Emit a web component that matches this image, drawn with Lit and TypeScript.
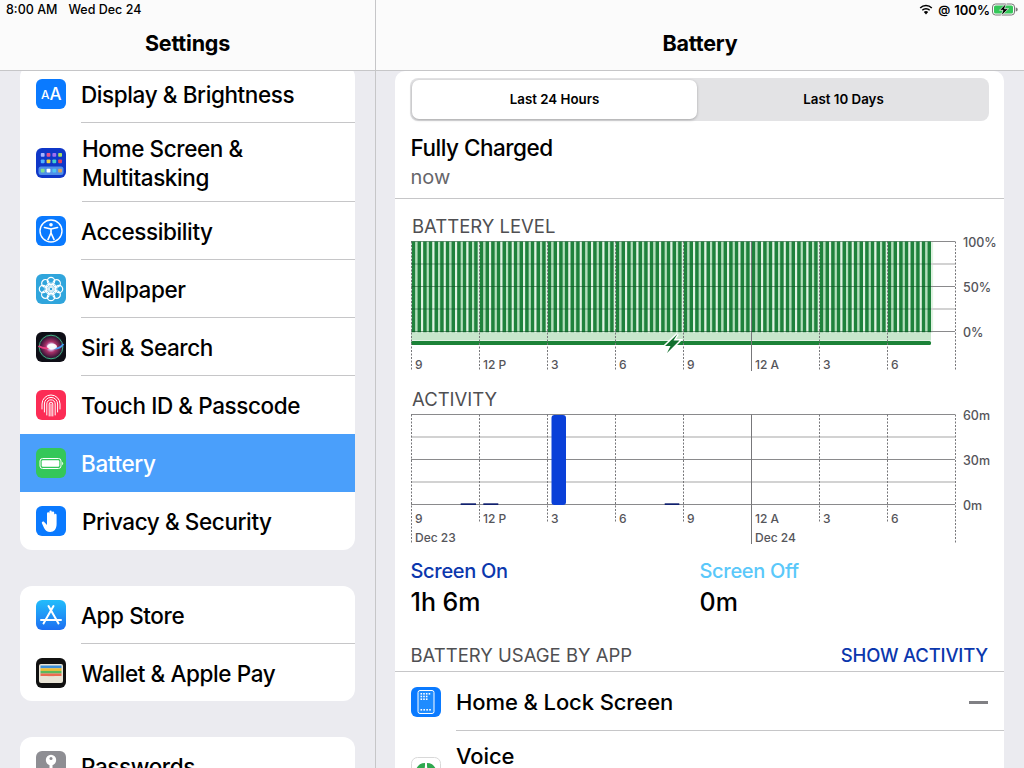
import { LitElement, html, css, svg } from "lit";
import { customElement } from "lit/decorators.js";

const ICONS: Record<string, unknown> = {
  display: html`<svg viewBox="0 0 30 30"><rect width="30" height="30" rx="6" fill="#0a7aff"/><text x="5" y="20" class="aa" font-size="12">A</text><text x="13.5" y="20.5" class="aa" font-size="17">A</text></svg>`,
  home: html`<svg viewBox="0 0 30 30"><rect width="30" height="30" rx="6" fill="#0f37c8"/>
    ${["#a8b4ff","#e8508a","#a070f0","#a8e060","#4fb0ff","#f0d040","#40d0d0","#e04060"].map((c,i)=>svg`<rect x=${4.8+(i%4)*5.8} y=${5+Math.floor(i/4)*6.4} width="3.8" height="3.8" rx=".8" fill=${c}/>`)}
    <rect x="2.5" y="18.5" width="25" height="8.5" rx="2.5" fill="#4f8fe8"/>
    ${["#7fe090","#fff","#50c8f0","#d8a060"].map((c,i)=>svg`<rect x=${4.8+i*5.8} y="20.8" width="3.8" height="3.8" rx=".8" fill=${c}/>`)}</svg>`,
  access: html`<svg viewBox="0 0 30 30"><rect width="30" height="30" rx="6" fill="#0a7aff"/><circle cx="15" cy="15" r="11" fill="none" stroke="#fff" stroke-width="1.4"/><circle cx="15" cy="8.8" r="1.8" fill="#fff"/><path d="M8.5 11.5 L15 13 L21.5 11.5 M15 13 V17 M15 17 L12 23.5 M15 17 L18 23.5" fill="none" stroke="#fff" stroke-width="1.7" stroke-linecap="round" stroke-linejoin="round"/></svg>`,
  wallpaper: html`<svg viewBox="0 0 30 30"><rect width="30" height="30" rx="6" fill="#30a5dc"/>
    ${[0,45,90,135,180,225,270,315].map(a=>svg`<circle cx="15" cy="7" r="3.7" fill="none" stroke="#fff" stroke-width="1.2" transform="rotate(${a} 15 15)"/>`)}
    ${[0,45,90,135,180,225,270,315].map(a=>svg`<circle cx="15" cy="11.2" r="2.2" fill="none" stroke="#fff" stroke-width=".9" transform="rotate(${a} 15 15)"/>`)}</svg>`,
  siri: html`<svg viewBox="0 0 30 30"><defs><radialGradient id="sg" cx=".5" cy=".5" r=".5"><stop offset="0" stop-color="#fff"/><stop offset=".18" stop-color="#d8d0ff"/><stop offset=".42" stop-color="#a83068"/><stop offset=".75" stop-color="#4a1a40"/><stop offset="1" stop-color="#0c1a20"/></radialGradient></defs><rect width="30" height="30" rx="6" fill="#0e0e16"/><circle cx="15" cy="15" r="13" fill="url(#sg)"/><circle cx="15" cy="15" r="11.8" fill="none" stroke="#3fae80" stroke-width="1"/><path d="M2.500 14 Q9 18 15 15" stroke="#e84080" fill="none" stroke-width="2"/><path d="M27.500 12 Q22 19 15 15" stroke="#4a9cf0" fill="none" stroke-width="2"/><ellipse cx="16" cy="14.500" rx="5" ry="3" fill="#fff" opacity=".92"/></svg>`,
  touch: html`<svg viewBox="0 0 30 30"><rect width="30" height="30" rx="6" fill="#fc2c55"/><g fill="none" stroke="#fff" stroke-width="1" stroke-linecap="round"><path d="M6 19 V14 A9 9 0 0 1 24 14 V19"/><path d="M8.400 22 V14 A6.600 6.600 0 0 1 21.600 14 V22"/><path d="M10.800 25 V14 A4.200 4.200 0 0 1 19.200 14 V25"/><path d="M13.200 26 V14 A1.800 1.800 0 0 1 16.800 14 V26"/><path d="M15 14 V26"/></g></svg>`,
  battery: html`<svg viewBox="0 0 30 30"><rect width="30" height="30" rx="6" fill="#34c759"/><rect x="4" y="10.500" width="21" height="10" rx="2.500" fill="none" stroke="#fff" stroke-width="1"/><rect x="5.700" y="12.200" width="17.600" height="6.600" rx="1.200" fill="#fff"/><path d="M26.200 13.800 a2 2 0 0 1 0 3.400z" fill="#fff"/></svg>`,
  hand: html`<svg viewBox="0 0 30 30"><rect width="30" height="30" rx="6" fill="#0a7aff"/><path d="M11 15 V7.500 a1.200 1.200 0 0 1 2.400 0 V13 V5.800 a1.200 1.200 0 0 1 2.400 0 V13 V6.600 a1.200 1.200 0 0 1 2.400 0 V14 V9 a1.200 1.200 0 0 1 2.400 0 V18 c0 5-2.500 8-6.500 8 c-3 0-4.600-1.500-6-4 L6 17.500 c-.8-1.500 1.200-2.600 2.200-1.400 L11 19z" fill="#fff"/></svg>`,
  appstore: html`<svg viewBox="0 0 30 30"><defs><linearGradient id="ag" x1="0" y1="0" x2="0" y2="1"><stop offset="0" stop-color="#22bdfb"/><stop offset="1" stop-color="#1d6ff2"/></linearGradient></defs><rect width="30" height="30" rx="6" fill="url(#ag)"/><path d="M12.500 6 L22.500 23.500 M17.500 6 L7.500 23.500 M5 20 H25" stroke="#fff" stroke-width="2" stroke-linecap="round" fill="none"/></svg>`,
  wallet: html`<svg viewBox="0 0 30 30"><rect width="30" height="30" rx="6" fill="#111"/><rect x="3" y="6" width="24" height="19" rx="2" fill="#e9e4d6"/><rect x="4.500" y="7.500" width="21" height="2.800" fill="#3c8fd8"/><rect x="4.500" y="10.300" width="21" height="2.600" fill="#f0bd30"/><rect x="4.500" y="12.900" width="21" height="2.600" fill="#5bb85c"/><rect x="4.500" y="15.500" width="21" height="2.600" fill="#ec6a50"/><path d="M4.500 18 H11 L15 21 L19 18 H25.500 V23 H4.500z" fill="#e9e4d6"/></svg>`,
  key: html`<svg viewBox="0 0 30 30"><rect width="30" height="30" rx="6" fill="#8e8e93"/><circle cx="15" cy="9" r="5.200" fill="#fff"/><circle cx="15" cy="7.500" r="1.500" fill="#8e8e93"/><path d="M13.500 13 H16.500 V24 L15 26 L13.500 24z" fill="#fff"/></svg>`,
};

const GROUPS = [
  [
    { icon: "display", label: "Display & Brightness" },
    { icon: "home", label: "Home Screen &\nMultitasking", tall: true },
    { icon: "access", label: "Accessibility" },
    { icon: "wallpaper", label: "Wallpaper" },
    { icon: "siri", label: "Siri & Search" },
    { icon: "touch", label: "Touch ID & Passcode" },
    { icon: "battery", label: "Battery", active: true },
    { icon: "hand", label: "Privacy & Security" },
  ],
  [
    { icon: "appstore", label: "App Store" },
    { icon: "wallet", label: "Wallet & Apple Pay" },
  ],
  [{ icon: "key", label: "Passwords" }],
];

const TICKS = [0, 68, 136, 204, 272, 340, 408, 476, 544];
const HOURS = ["9", "12 P", "3", "6", "9", "12 A", "3", "6"];

function grid(from: number, bottom: number, tall: (i: number) => number) {
  const ys = [0, 1, 2, 3, 4].map((i) => (i * bottom) / 4);
  return svg`
    ${ys.map((y, i) => svg`<line x1=${from} x2="544" y1=${y} y2=${y} stroke=${i % 2 ? "#d2d2d2" : "#8a8a8c"} stroke-width=${i % 2 ? 2 : 1}/>`)}
    ${TICKS.map((x, i) => svg`<line x1=${x + 0.5} x2=${x + 0.5} y1="0" y2=${tall(i)} stroke="#77777a" stroke-width="1" stroke-dasharray=${i === 5 ? "none" : "2 1.500"}/>`)}
  `;
}

function hourLabels(y: number) {
  return HOURS.map((h, i) => svg`<text class="tick" x=${TICKS[i] + 4} y=${y}>${h}</text>`);
}

@customElement("app-root")
export class AppRoot extends LitElement {
  static styles = css`
    :host {
      display: block;
      width: 1024px;
      height: 768px;
      overflow: hidden;
      background: #ebebf0;
      font-family: Inter, "Liberation Sans", sans-serif;
      color: #000;
    }
    .page { display: grid; grid-template-columns: 375px 1px 648px; height: 768px; }
    .vline { background: #c6c6c8; }
    .pane { display: flex; flex-direction: column; height: 768px; overflow: hidden; }
    .bar {
      flex: none; box-sizing: border-box; background: #fbfbfb;
      border-bottom: 1px solid #c6c6c8; height: 71px;
      display: flex; flex-direction: column;
    }
    .status { height: 19px; display: flex; align-items: center; justify-content: space-between; font-size: 12.5px; font-weight: 500; padding: 0 6px; flex: none; }
    .status.end { justify-content: flex-end; }
    .status .date { margin-left: 11px; }
    .status-r { display: flex; align-items: center; gap: 5px; font-weight: 600; font-size: 13px; }
    .status-r .at { font-size: 12px; }
    .status-r .pct { margin-left: -1px; }
    .status-r .bat { margin-left: -3px; }
    .title { flex: 1; display: flex; align-items: center; justify-content: center; font-size: 21.5px; font-weight: 700; padding-bottom: 3px; letter-spacing: -0.2px; }
    .list { flex: 1; overflow: hidden; padding: 0 20px; }
    .list-inner { margin-top: -6px; display: flex; flex-direction: column; gap: 36px; }
    .card { background: #fff; border-radius: 12px; overflow: hidden; }
    .card:nth-child(2) { height: 115px; }
    .row { display: flex; align-items: center; height: 58px; padding-left: 16px; position: relative; font-size: 22.5px; font-weight: 500; letter-spacing: -0.4px; }
    .row.tall { height: 79px; line-height: 29px; white-space: pre-line; }
    .row.tall .label { padding-left: 1px; }
    .row.tall .sep { left: 62px; }
    .row svg { width: 30px; height: 30px; flex: none; margin-right: 15px; display: block; }
    .row.on { background: #4a9ffb; color: #fff; }
    .row .sep { position: absolute; left: 61px; right: 0; bottom: 0; height: 1px; background: #c6c6c8; }
    .aa { fill: #fff; font-family: Inter, sans-serif; }

    .detail { flex: 1; overflow: hidden; padding: 0 20px 0 19px; }
    .sheet { background: #fff; border-radius: 10px 10px 0 0; height: 697px; overflow: hidden; }
    .seg { margin: 7px 15px 0 15px; height: 43px; box-sizing: border-box; background: #e3e3e5; border-radius: 8px; padding: 2px; display: grid; grid-template-columns: 285px 1fr; font-size: 13.3px; font-weight: 600; }
    .seg div { display: flex; align-items: center; justify-content: center; padding-bottom: 2px; box-sizing: border-box; }
    .seg .sel { background: #fff; border-radius: 7px; box-shadow: 0 1px 3px rgba(0,0,0,.28); }
    .seg .other { padding-left: 3px; }
    .head { padding: 12px 0 0 15.5px; border-bottom: 1px solid #c6c6c8; height: 65px; margin-bottom: 17px; }
    .head .big { font-size: 22.5px; font-weight: 500; line-height: 30px; letter-spacing: -0.5px; }
    .head .small { font-size: 20px; line-height: 28px; color: #66666a; }
    .sec { font-size: 18.5px; color: #4f4f52; line-height: 20px; padding-left: 17px; }
    .sec.second { margin-top: 18px; }
    .chart { display: block; margin-left: 16px; }
    .tick { font: 500 12px Inter, sans-serif; fill: #55555a; }
    .axis { font: 500 12.5px Inter, sans-serif; fill: #55555a; }
    .stats { display: grid; grid-template-columns: 289px 1fr; padding-left: 15.5px; margin-top: 14px; }
    .stat-l { font-size: 20px; font-weight: 500; line-height: 27px; letter-spacing: -0.3px; }
    .stat-v { font-size: 25px; font-weight: 500; line-height: 35px; }
    .blue { color: #0b37ad; }
    .cyan { color: #5ac8fa; }
    .usage { display: flex; justify-content: space-between; align-items: center; padding: 0 16px 0 15.5px; height: 32px; margin-top: 19px; font-size: 18.5px; color: #4f4f52; border-bottom: 1px solid #c6c6c8; }
    .usage .show { color: #0b37ad; font-weight: 500; letter-spacing: -0.2px; }
    .app { display: flex; align-items: center; height: 59px; padding-left: 16px; position: relative; font-size: 22px; font-weight: 500; letter-spacing: -0.1px; }
    .app svg { width: 30px; height: 30px; margin-right: 15px; flex: none; }
    .app .sep { position: absolute; left: 61px; right: 0; bottom: 0; height: 1px; background: #c6c6c8; }
    .dash { position: absolute; right: 16px; top: 28.5px; width: 19px; height: 3px; background: #808084; }
    .voice { height: 60px; padding-left: 16px; display: flex; font-size: 22px; font-weight: 500; letter-spacing: -0.1px; }
    .voice svg { width: 30px; height: 30px; margin: 26px 15px 0 0; flex: none; }
    .voice span { line-height: 50px; }
  `;

  batteryChart() {
    const bars = [];
    const step = 68 / 12;
    for (let i = 0; i < 92; i++) {
      bars.push(svg`<rect x=${i * step + 0.8} y="0" width="3.700" height="91" fill="#1f823c"/>`);
      bars.push(svg`<rect x=${i * step + 4.5} y="0" width=${step - 3.7} height="91" fill=${i % 2 ? "#e0f3e2" : "#b3e0bb"}/>`);
    }
    const bolt = "M266.500 92.500 L254 104.500 H259.500 L256 111.500 L268.500 99 H262.500 Z";
    return html`<svg class="chart" width="594" height="135" viewBox="0 0 594 135">
      <g transform="translate(0,5.500)">
        ${bars}
        <rect x="0" y="91" width="520" height="8" fill="#c8e6cc"/>
        <rect x="0" y="99.500" width="520" height="4" rx="1.500" fill="#1c8238"/>
        ${grid(520, 90, (i) => (i === 5 ? 130 : 128))}
        ${[0, 45, 90].map((y) => svg`<line x1="0" x2="520" y1=${y} y2=${y} stroke="#0c4a22" stroke-opacity=".55"/>`)}
        ${[22.5, 67.5].map((y) => svg`<line x1="0" x2="520" y1=${y} y2=${y} stroke="#0c4a22" stroke-opacity=".25" stroke-width="2"/>`)}
        <path d=${bolt} fill="#fff" stroke="#fff" stroke-width="3"/>
        <path d=${bolt} fill="#12702e"/>
        ${hourLabels(127.500)}
        <text class="axis" x="552" y="5.500">100%</text>
        <text class="axis" x="552" y="50.500">50%</text>
        <text class="axis" x="552" y="95.500">0%</text>
      </g>
    </svg>`;
  }

  activityChart() {
    return html`<svg class="chart" width="594" height="135" viewBox="0 0 594 135">
      <g transform="translate(0,5.500)">
        ${grid(0, 90, (i) => (i === 0 || i === 8 ? 128 : i === 5 ? 130 : 108))}
        <rect x="140.500" y="0.500" width="14.500" height="90" rx="3" fill="#0a40d8"/>
        <rect x="49.700" y="88.800" width="15.300" height="1.700" fill="#10206e"/>
        <rect x="72.300" y="88.800" width="15" height="1.700" fill="#10206e"/>
        <rect x="253.700" y="88.800" width="14.600" height="1.700" fill="#10206e"/>
        ${hourLabels(108.500)}
        <text class="tick" x="4" y="127.500">Dec 23</text>
        <text class="tick" x="344" y="127.500">Dec 24</text>
        <text class="axis" x="552" y="5.500">60m</text>
        <text class="axis" x="552" y="50.500">30m</text>
        <text class="axis" x="552" y="95.500">0m</text>
      </g>
    </svg>`;
  }

  render() {
    return html`<div class="page">
      <div class="pane">
        <div class="bar">
          <div class="status"><span>8:00 AM<span class="date">Wed Dec 24</span></span></div>
          <div class="title">Settings</div>
        </div>
        <div class="list"><div class="list-inner">
          ${GROUPS.map((g) => html`<div class="card">
            ${g.map((r: any, i) => html`<div class="row ${r.tall ? "tall" : ""} ${r.active ? "on" : ""}">
              ${ICONS[r.icon]}<span class="label" style=${r.icon === "hand" ? "padding-left:1px" : ""}>${r.label}</span>
              ${i < g.length - 1 && !r.active && !(g[i + 1] as any).active ? html`<div class="sep"></div>` : ""}
            </div>`)}
          </div>`)}
        </div></div>
      </div>
      <div class="vline"></div>
      <div class="pane">
        <div class="bar">
          <div class="status end">
            <span class="status-r">
              <svg width="14" height="11" viewBox="0 0 14 11"><path d="M7 10.500 L4.800 8 A3.200 3.200 0 0 1 9.200 8Z" fill="#000"/><path d="M3.300 6.300 A5.300 5.300 0 0 1 10.700 6.300 M1.200 4 A8.200 8.200 0 0 1 12.800 4" fill="none" stroke="#000" stroke-width="1.500"/></svg>
              <span class="at">@</span>
              <span class="pct">100%</span>
              <svg class="bat" width="26" height="13" viewBox="0 0 26 13"><rect x=".5" y="1" width="22" height="11" rx="3" fill="none" stroke="#777"/><rect x="2" y="2.500" width="19" height="8" rx="1.500" fill="#34c759"/><path d="M23.700 4.500 a2 2 0 0 1 0 4z" fill="#777"/><path d="M14.500 0 L7.500 7.300 H11 L9 13 L16.500 5.700 H12.500 Z" fill="#000" stroke="#fff" stroke-width=".7"/></svg>
            </span>
          </div>
          <div class="title">Battery</div>
        </div>
        <div class="detail"><div class="sheet">
          <div class="seg"><div class="sel">Last 24 Hours</div><div class="other">Last 10 Days</div></div>
          <div class="head"><div class="big">Fully Charged</div><div class="small">now</div></div>
          <div class="sec">BATTERY LEVEL</div>
          ${this.batteryChart()}
          <div class="sec second">ACTIVITY</div>
          ${this.activityChart()}
          <div class="stats">
            <div><div class="stat-l blue">Screen On</div><div class="stat-v">1h 6m</div></div>
            <div><div class="stat-l cyan">Screen Off</div><div class="stat-v">0m</div></div>
          </div>
          <div class="usage"><span>BATTERY USAGE BY APP</span><span class="show">SHOW ACTIVITY</span></div>
          <div class="app">
            <svg viewBox="0 0 30 30"><rect width="30" height="30" rx="6" fill="#0a7aff"/><rect x="7" y="3.500" width="16" height="23" rx="2" fill="#1f8cff" stroke="#fff" stroke-width="1"/>${[0,1,2].map(r=>[0,1,2,3].map(c=>(c<3||r<1)?svg`<rect x=${9.5+c*2.7} y=${6+r*2.7} width="1.600" height="1.600" fill="#fff"/>`:""))}${[0,1,2,3].map(c=>svg`<rect x=${9.5+c*2.9} y="22" width="1.600" height="1.600" fill="#fff"/>`)}</svg>
            <span>Home & Lock Screen</span><div class="dash"></div><div class="sep"></div>
          </div>
          <div class="voice">
            <svg viewBox="0 0 30 30"><rect x=".5" y=".5" width="29" height="29" rx="6" fill="#fff" stroke="#d8d8d8"/><path d="M14 6 C7 6 3.500 12 4.500 20 C10 20 14.500 15 14 6Z M16 6 C23 6 26.500 12 25.500 20 C20 20 15.500 15 16 6Z" fill="#2fa84f"/></svg>
            <span>Voice</span>
          </div>
        </div></div>
      </div>
    </div>`;
  }
}
